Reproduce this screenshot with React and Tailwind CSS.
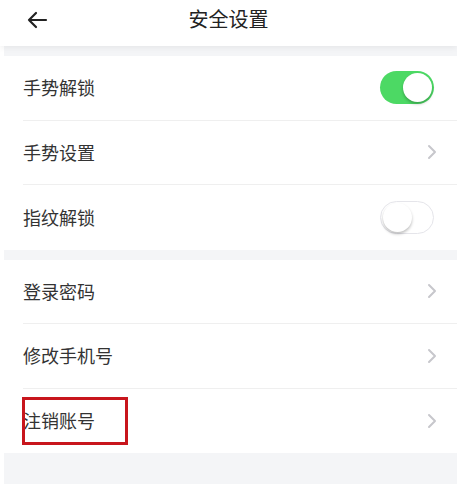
import React from 'react';

const Chevron = () => (
    <svg width="10" height="16" viewBox="0 0 10 16" fill="none">
        <path d="M2 2l6 6-6 6" stroke="#c7c7cc" strokeWidth="2" strokeLinecap="round" strokeLinejoin="round" />
    </svg>
);

const Toggle = ({ on }) => (
    <div
        className={`mr-[3px] w-[54px] h-[33px] rounded-full flex items-center p-[2px] ${on ? 'bg-[#4cd964] justify-end' : 'bg-white border border-[#e5e5ea] justify-start'}`}
    >
        <div className="w-[29px] h-[29px] rounded-full bg-white shadow-[0_2px_3px_rgba(0,0,0,0.25)]" />
    </div>
);

const Row = ({ label, right, last, children }) => (
    <div className="pl-[23px] bg-white">
        <div className={`relative h-[64.5px] flex items-center justify-between pr-[20px] ${last ? '' : 'border-b border-[#efefef]'}`}>
            <span className="text-[18px] text-[#333]">{label}</span>
            {right}
            {children}
        </div>
    </div>
);

const App = () => {
    return (
        <div className="w-[457px] h-[484px] bg-white overflow-hidden" style={{ fontFamily: '"Noto Sans CJK SC", "Noto Sans", sans-serif' }}>
            <header className="relative z-10 h-[46px] flex items-center justify-center bg-white shadow-[0_2px_6px_rgba(0,0,0,0.06)]">
                <svg className="absolute left-[26px] top-[11px]" width="22" height="18" viewBox="0 0 22 18" fill="none">
                    <path d="M20 9H3M10 2L3 9l7 7" stroke="#222" strokeWidth="2.2" strokeLinecap="round" strokeLinejoin="round" />
                </svg>
                <h1 className="text-[20px] text-[#222] -mt-[8px]">安全设置</h1>
            </header>

            <div className="ml-[4px] h-[10px] bg-[#f4f5f7]" />

            <Row label="手势解锁" right={<Toggle on />} />
            <Row label="手势设置" right={<Chevron />} />
            <Row label="指纹解锁" right={<Toggle on={false} />} last />

            <div className="ml-[4px] h-[10px] bg-[#f4f5f7]" />

            <Row label="登录密码" right={<Chevron />} />
            <Row label="修改手机号" right={<Chevron />} />
            <Row label="注销账号" right={<Chevron />} last>
                <div className="absolute left-[-1px] top-[8px] w-[106px] h-[48px] border-[3px] border-[#c8161d]" />
            </Row>

            <div className="ml-[4px] h-[40px] bg-[#f4f5f7]" />
        </div>
    );
};

export default App;
